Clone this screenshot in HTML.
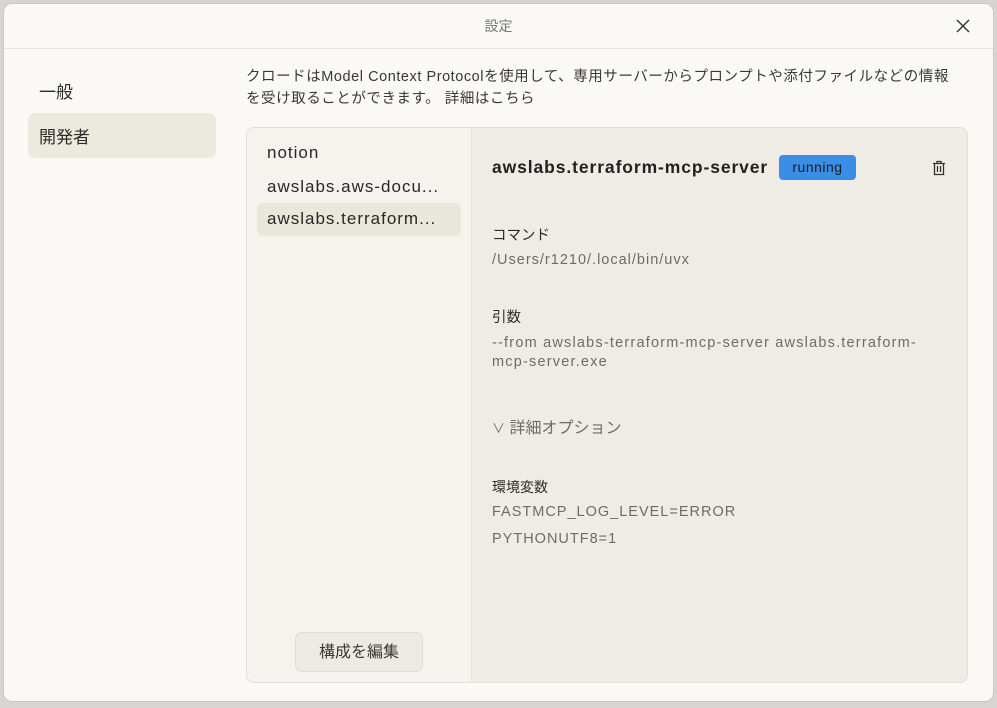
<!DOCTYPE html>
<html><head><meta charset="utf-8"><style>
*{box-sizing:border-box;margin:0;padding:0}
body{width:997px;height:708px;background:#d6d5d2;font-family:"Liberation Sans","Noto Sans CJK JP",sans-serif;overflow:hidden;position:relative}
.win{position:absolute;left:3px;top:3px;width:991px;height:699px;background:#faf9f5;border:1px solid #c9c8c4;border-radius:9px;overflow:hidden}
.title{position:absolute;left:0;top:0;width:100%;height:45px;border-bottom:1px solid #e8e6e0;text-align:center;line-height:45px;font-size:14px;color:#777}
.close{position:absolute;right:22px;top:14px;width:16px;height:16px}
.nav{position:absolute;left:25px;font-size:17px;color:#2d2b28}
.sel{position:absolute;left:24px;top:109px;width:188px;height:45px;background:#ece9df;border-radius:7px}
.desc{position:absolute;left:242px;top:62px;font-size:14.5px;color:#3a3835;line-height:22px;width:740px;letter-spacing:0.55px;white-space:nowrap}
.panel{position:absolute;left:242px;top:123px;width:722px;height:556px;border:1px solid #e2e0d9;border-radius:8px;overflow:hidden;background:#eeece5}
.list{position:absolute;left:0;top:0;width:225px;height:100%;background:#f4f3ee;border-right:1px solid #e5e3dc}
.item{position:absolute;left:20px;font-size:17px;color:#2a2826;white-space:nowrap;letter-spacing:1px}
.isel{position:absolute;left:10px;top:75px;width:204px;height:33px;background:#e9e6dc;border-radius:6px}
.btn{position:absolute;left:48px;top:504px;width:128px;height:40px;border:1px solid #e0ddd3;border-radius:7px;background:#ecebe3;font-size:16px;color:#3a3835;text-align:center;line-height:40px}
.r{position:absolute;left:245px;white-space:nowrap}
.lbl{font-size:14.5px;color:#2d2b28}
.val{font-size:14.5px;color:#6f6c66;letter-spacing:1px}
</style></head><body>
<div class="win">
<div class="title">設定</div>
<svg class="close" viewBox="0 0 16 16"><path d="M2 2L14 14M14 2L2 14" stroke="#333" stroke-width="1.4"/></svg>
<div class="sel"></div>
<div class="nav" style="top:74px;left:35px">一般</div>
<div class="nav" style="top:119px;left:35px">開発者</div>
<div class="desc">クロードはModel Context Protocolを使用して、専用サーバーからプロンプトや添付ファイルなどの情報<br>を受け取ることができます。 詳細はこちら</div>
<div class="panel">
<div class="list">
<div class="isel"></div>
<div class="item" style="top:15px">notion</div>
<div class="item" style="top:49px">awslabs.aws-docu...</div>
<div class="item" style="top:81px">awslabs.terraform...</div>
<div class="btn">構成を編集</div>
</div>
<div class="r" style="top:29px;font-size:17.5px;font-weight:bold;color:#222;letter-spacing:0.9px">awslabs.terraform-mcp-server</div>
<div class="r" style="left:532px;top:27px;width:77px;height:25px;background:#3a8ee6;border-radius:4px;font-size:14px;color:#1d1d1d;text-align:center;line-height:25px;letter-spacing:0.5px">running</div>
<svg style="position:absolute;left:685px;top:32px" width="14" height="16" viewBox="0 0 14 16"><path d="M1 3.5H13M5 3.5V1.5H9V3.5M2.5 3.5V14.5H11.5V3.5M5.5 6V12M8.5 6V12" stroke="#333" stroke-width="1.3" fill="none"/></svg>
<div class="r lbl" style="top:96px">コマンド</div>
<div class="r val" style="top:124px">/Users/r1210/.local/bin/uvx</div>
<div class="r lbl" style="top:178px">引数</div>
<div class="r val" style="top:206px;line-height:19px;letter-spacing:1.2px">--from awslabs-terraform-mcp-server awslabs.terraform-<br>mcp-server.exe</div>
<div class="r" style="top:286px;font-size:16px;color:#6f6c66"><span style="font-size:13px">∨</span> 詳細オプション</div>
<div class="r lbl" style="top:349px;font-size:14px">環境変数</div>
<div class="r val" style="top:376px">FASTMCP_LOG_LEVEL=ERROR</div>
<div class="r val" style="top:403px">PYTHONUTF8=1</div>
</div>
</div>
</body></html>
